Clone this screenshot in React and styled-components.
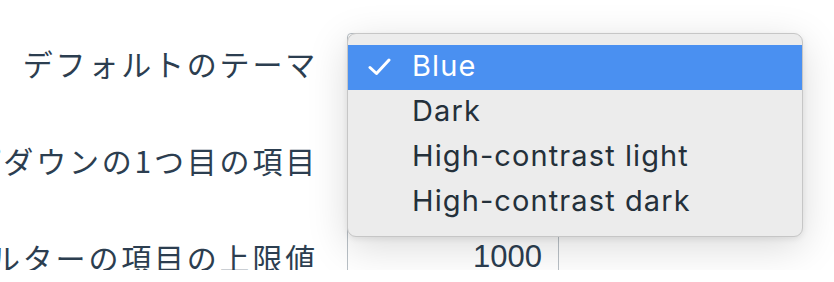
import styled, { createGlobalStyle } from "styled-components";

const GlobalStyle = createGlobalStyle`
  html, body {
    margin: 0;
    padding: 0;
    background: #ffffff;
  }
`;

const themes = ["Blue", "Dark", "High-contrast light", "High-contrast dark"];

const fields = [
  { label: "デフォルトのテーマ", kind: "select" },
  { label: "ドロップダウンの1つ目の項目", kind: "select" },
  { label: "フィルターの項目の上限値", kind: "number", value: "1000" },
];

const CheckIcon = () => (
  <svg width="24" height="20" viewBox="0 0 24 20">
    <path
      d="M2 10.5 L8.5 16.5 L21 3"
      fill="none"
      stroke="#ffffff"
      strokeWidth="3"
      strokeLinecap="round"
      strokeLinejoin="round"
    />
  </svg>
);

const App = () => {
  return (
    <>
      <GlobalStyle />
      <Page>
        <Form>
          {fields.map((f) => (
            <Row key={f.label}>
              <Label>
                <span>{f.label}</span>
              </Label>
              {f.kind === "number" ? (
                <NumberBox>{f.value}</NumberBox>
              ) : (
                <SelectBox />
              )}
            </Row>
          ))}
        </Form>
        <Menu>
          {themes.map((t, i) => (
            <Item key={t} $active={i === 0}>
              <Tick>{i === 0 && <CheckIcon />}</Tick>
              {t}
            </Item>
          ))}
        </Menu>
      </Page>
    </>
  );
};

const Page = styled.div`
  position: relative;
  width: 834px;
  height: 270px;
  overflow: hidden;
  background: #ffffff;
`;

const Form = styled.div`
  display: grid;
  row-gap: 37px;
  padding-top: 33px;
`;

const Row = styled.div`
  display: grid;
  grid-template-columns: 318px 212px;
  column-gap: 29px;
  height: 60px;
  align-items: center;
`;

const Label = styled.div`
  display: flex;
  justify-content: flex-end;
  white-space: nowrap;
  font-family: "Noto Sans CJK JP", sans-serif;
  font-size: 30px;
  letter-spacing: 2.8px;
  color: #2c3e50;

  span {
    flex-shrink: 0;
  }
`;

const SelectBox = styled.div`
  height: 60px;
  box-sizing: border-box;
  border: 1px solid #b9c0c6;
  border-radius: 4px;
  background: #ffffff;
`;

const NumberBox = styled.div`
  height: 60px;
  box-sizing: border-box;
  border: 1px solid #b9c0c6;
  border-top: none;
  padding-right: 16px;
  display: flex;
  align-items: center;
  justify-content: flex-end;
  font-family: "Liberation Sans", Arial, sans-serif;
  font-size: 31px;
  color: #2c3e50;
`;

const Menu = styled.div`
  position: absolute;
  left: 347px;
  top: 33px;
  width: 456px;
  box-sizing: border-box;
  padding: 11px 0;
  background: #ececec;
  border: 1px solid #c6c6c6;
  border-radius: 9px;
  box-shadow: 0 10px 40px rgba(0, 0, 0, 0.15), 0 2px 6px rgba(0, 0, 0, 0.08);
  font-family: Inter, "Liberation Sans", sans-serif;
`;

const Item = styled.div`
  display: flex;
  align-items: center;
  box-sizing: border-box;
  height: 45px;
  padding: 0 0 5px 20px;
  font-size: 29px;
  letter-spacing: 1.1px;
  color: ${(p) => (p.$active ? "#ffffff" : "#24303a")};
  background: ${(p) => (p.$active ? "#4a90f1" : "transparent")};
`;

const Tick = styled.span`
  display: flex;
  align-items: center;
  width: 44px;
  height: 20px;
  margin-top: 3px;
`;

export default App;
